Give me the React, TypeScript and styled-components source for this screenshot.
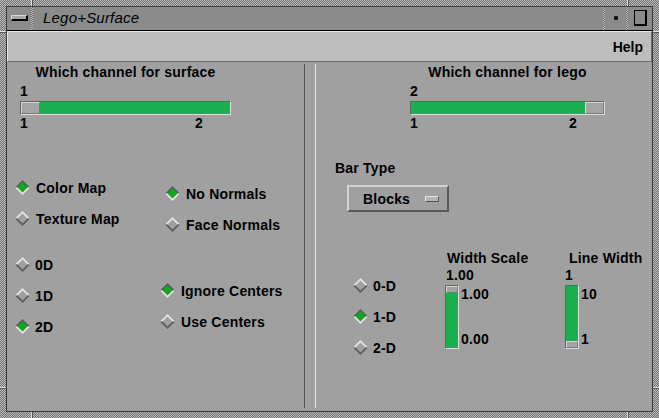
import styled, { createGlobalStyle } from 'styled-components'

const GlobalStyle = createGlobalStyle`
  html, body {
    margin: 0;
    padding: 0;
    background: #a0a0a0;
  }
  body {
    font-family: "Liberation Sans", Arial, Helvetica, sans-serif;
    color: #000;
  }
`

const stipple = `
  background-color: #969696;
  background-image: repeating-conic-gradient(#727272 0 25%, #bcbcbc 0 50%);
  background-size: 2px 2px;
`

const GREEN = '#1bb04f'
const LIGHT = '#dedede'
const DARK = '#646464'

const Window = styled.div`
  position: relative;
  width: 659px;
  height: 418px;
  box-sizing: border-box;
  padding: 6px;
  display: flex;
  ${stipple}
`

const Inner = styled.div`
  flex: 1;
  display: flex;
  flex-direction: column;
  border: 1px solid #3a3a3a;
  background: #a0a0a0;
`

const Mark = styled.div<{ $x?: number; $y?: number; $right?: boolean; $bottom?: boolean; $vertical?: boolean }>`
  position: absolute;
  background: #e2e2e2;
  border-${p => (p.$vertical ? 'right' : 'bottom')}: 1px solid #555;
  ${p => (p.$vertical ? 'width: 1px; height: 6px;' : 'width: 6px; height: 1px;')}
  ${p => (p.$vertical ? `left: ${p.$x}px;` : p.$right ? 'right: 0;' : 'left: 0;')}
  ${p => (p.$vertical ? (p.$bottom ? 'bottom: 0;' : 'top: 0;') : `top: ${p.$y}px;`)}
`

const TitleBar = styled.div`
  height: 24px;
  box-sizing: border-box;
  display: flex;
  background: #8b8b8b;
  border-bottom: 1px solid #000;
`

const TitleSep = styled.div`
  width: 2px;
  ${stipple}
`

const MenuButton = styled.div`
  width: 24px;
  display: flex;
  align-items: center;
  justify-content: center;
`

const MenuGlyph = styled.div`
  width: 17px;
  height: 6px;
  box-sizing: border-box;
  margin-top: -1px;
  background: #a8a8a8;
  border-top: 1px solid #d8d8d8;
  border-left: 1px solid #d8d8d8;
  border-bottom: 2px solid #000;
  border-right: 2px solid #000;
`

const TitleText = styled.div`
  flex: 1;
  padding-left: 10px;
  font-size: 15px;
  font-style: italic;
  line-height: 22px;
  letter-spacing: 0.2px;
`

const WinButton = styled.div<{ $w: number }>`
  width: ${p => p.$w}px;
  display: flex;
  align-items: center;
  justify-content: center;
`

const Dot = styled.div`
  width: 4px;
  height: 4px;
  box-sizing: border-box;
  background: #000;
  border: 1px solid #222;
  margin-top: -2px;
`

const MaxGlyph = styled.div`
  width: 13px;
  height: 16px;
  box-sizing: border-box;
  border: 1px solid #000;
  border-right-width: 2px;
  border-bottom-width: 2px;
  background: #8b8b8b;
  margin-top: -2px;
`

const MenuBar = styled.div`
  height: 31px;
  box-sizing: border-box;
  display: flex;
  align-items: center;
  justify-content: flex-end;
  padding-right: 8px;
  background: #bdbdbd;
  border-top: 1px solid #e8e8e8;
  border-left: 1px solid #e8e8e8;
  border-bottom: 1px solid #6c6c6c;
  border-right: 1px solid #6c6c6c;
`

const MenuItem = styled.span`
  font-size: 14px;
  font-weight: bold;
  line-height: 16px;
`

const Content = styled.div`
  flex: 1;
  display: grid;
  grid-template-columns: 297px 12px 1fr;
  font-size: 14px;
  font-weight: bold;
  letter-spacing: 0.2px;
`

const Panel = styled.div`
  padding-top: 2px;
  display: flex;
  flex-direction: column;
  align-items: flex-start;
`

const Separator = styled.div`
  margin: 2px 0 3px;
  border-left: 1px solid #555;
  border-right: 1px solid #e4e4e4;
`

const Line = styled.div<{ $top?: number; $left?: number }>`
  line-height: 16px;
  white-space: nowrap;
  margin-top: ${p => p.$top ?? 0}px;
  margin-left: ${p => p.$left ?? 0}px;
`

const SliderBlock = styled.div<{ $left: number; $width: number }>`
  margin-left: ${p => p.$left}px;
  width: ${p => p.$width}px;
`

const SliderTitle = styled.div`
  line-height: 16px;
  white-space: nowrap;
  display: flex;
  justify-content: center;
`

const Trough = styled.div<{ $vertical?: boolean }>`
  display: flex;
  flex-direction: ${p => (p.$vertical ? 'column' : 'row')};
  box-sizing: border-box;
  ${p => (p.$vertical ? 'width: 14px; height: 64px;' : 'height: 14px; margin-top: 2px;')}
  background: ${GREEN};
  border-top: 1px solid ${DARK};
  border-left: 1px solid ${DARK};
  border-bottom: 1px solid ${LIGHT};
  border-right: 1px solid ${LIGHT};
`

const Thumb = styled.div<{ $end?: boolean; $vertical?: boolean }>`
  box-sizing: border-box;
  ${p => (p.$vertical ? 'height: 7px;' : 'width: 19px;')}
  ${p => (p.$end ? (p.$vertical ? 'margin-top: auto;' : 'margin-left: auto;') : '')}
  background: #a4a4a4;
  border-top: 1px solid #d6d6d6;
  border-left: 1px solid #d6d6d6;
  border-bottom: 1px solid #7a7a7a;
  border-right: 1px solid #7a7a7a;
`

const ScaleLabels = styled.div<{ $pad: number }>`
  display: flex;
  justify-content: space-between;
  padding-right: ${p => p.$pad}px;
  line-height: 16px;
`

const RadioRow = styled.div<{ $top: number; $left: number }>`
  display: flex;
  align-items: flex-start;
  margin-top: ${p => p.$top}px;
  margin-left: ${p => p.$left}px;
`

const RadioGroup = styled.div<{ $width?: number; $top?: number; $left?: number }>`
  display: flex;
  flex-direction: column;
  ${p => (p.$width ? `width: ${p.$width}px;` : '')}
  margin-top: ${p => p.$top ?? 0}px;
  margin-left: ${p => p.$left ?? 0}px;
`

const RadioItem = styled.div<{ $gap?: number }>`
  display: flex;
  align-items: center;
  gap: ${p => p.$gap ?? 6}px;
  height: 31px;
  line-height: 16px;
  white-space: nowrap;
`

const OptionButton = styled.div`
  margin-top: 9px;
  margin-left: 31px;
  width: 102px;
  height: 27px;
  box-sizing: border-box;
  display: flex;
  align-items: center;
  padding-left: 14px;
  padding-right: 8px;
  border-top: 2px solid #d2d2d2;
  border-left: 2px solid #d2d2d2;
  border-bottom: 2px solid #5a5a5a;
  border-right: 2px solid #5a5a5a;
  line-height: 16px;
`

const Indicator = styled.div`
  margin-left: auto;
  width: 14px;
  height: 6px;
  box-sizing: border-box;
  background: #b4b4b4;
  border-top: 1px solid #e6e6e6;
  border-left: 1px solid #e6e6e6;
  border-bottom: 1px solid #555;
  border-right: 1px solid #555;
`

const BottomArea = styled.div`
  display: flex;
  align-items: flex-start;
  margin-top: 38px;
`

const VScale = styled.div<{ $width?: number }>`
  display: flex;
  flex-direction: column;
  ${p => (p.$width ? `width: ${p.$width}px;` : '')}
`

const VScaleRow = styled.div`
  display: flex;
  margin-top: 2px;
`

const VScaleLabels = styled.div`
  display: flex;
  flex-direction: column;
  justify-content: space-between;
  height: 64px;
  box-sizing: border-box;
  padding: 1px 0 2px;
  margin-left: 2px;
  line-height: 16px;
`

const Diamond = ({ on }: { on?: boolean }) => (
  <svg width="15" height="15" viewBox="0 0 15 15" style={{ flex: 'none' }}>
    <polygon points="0,7.5 7.5,0 15,7.5" fill={on ? '#5c5c5c' : '#e4e4e4'} />
    <polygon points="0,7.5 15,7.5 7.5,15" fill={on ? '#e4e4e4' : '#5c5c5c'} />
    <polygon points="7.5,2.5 12.5,7.5 7.5,12.5 2.5,7.5" fill={on ? '#12a81c' : '#a0a0a0'} />
  </svg>
)

const Radio = ({ label, on, gap }: { label: string; on?: boolean; gap?: number }) => (
  <RadioItem $gap={gap}>
    <Diamond on={on} />
    <span>{label}</span>
  </RadioItem>
)

const HSlider = ({ title, value, max, left, width, end }: { title: string; value: string; max: string; left: number; width: number; end?: boolean }) => (
  <SliderBlock $left={left} $width={width}>
    <SliderTitle>{title}</SliderTitle>
    <Line $top={3}>{value}</Line>
    <Trough>
      <Thumb $end={end} />
    </Trough>
    <ScaleLabels $pad={28}>
      <span>1</span>
      <span>{max}</span>
    </ScaleLabels>
  </SliderBlock>
)

const VSlider = ({ title, value, top, bottom, width, indent, end }: { title: string; value: string; top: string; bottom: string; width?: number; indent: number; end?: boolean }) => (
  <VScale $width={width}>
    <Line $left={indent}>{title}</Line>
    <Line $top={1} $left={end ? 0 : 1}>{value}</Line>
    <VScaleRow>
      <Trough $vertical>
        <Thumb $vertical $end={end} />
      </Trough>
      <VScaleLabels>
        <span>{top}</span>
        <span>{bottom}</span>
      </VScaleLabels>
    </VScaleRow>
  </VScale>
)

export default function App() {
  return (
    <>
      <GlobalStyle />
      <Window>
        <Mark $vertical $x={31} />
        <Mark $vertical $x={627} />
        <Mark $vertical $bottom $x={31} />
        <Mark $vertical $bottom $x={627} />
        <Mark $y={31} />
        <Mark $right $y={31} />
        <Mark $y={387} />
        <Mark $right $y={387} />
        <Inner>
          <TitleBar>
            <MenuButton>
              <MenuGlyph />
            </MenuButton>
            <TitleSep />
            <TitleText>Lego+Surface</TitleText>
            <TitleSep />
            <WinButton $w={21}>
              <Dot />
            </WinButton>
            <TitleSep />
            <WinButton $w={24}>
              <MaxGlyph />
            </WinButton>
          </TitleBar>
          <MenuBar>
            <MenuItem>Help</MenuItem>
          </MenuBar>
          <Content>
            <Panel>
              <HSlider title="Which channel for surface" value="1" max="2" left={13} width={211} />
              <RadioRow $top={41} $left={8}>
                <RadioGroup $width={150}>
                  <Radio label="Color Map" on />
                  <Radio label="Texture Map" />
                </RadioGroup>
                <RadioGroup $top={6}>
                  <Radio label="No Normals" on />
                  <Radio label="Face Normals" />
                </RadioGroup>
              </RadioRow>
              <RadioRow $top={9} $left={8}>
                <RadioGroup $width={145}>
                  <Radio label="0D" gap={5} />
                  <Radio label="1D" gap={5} />
                  <Radio label="2D" on gap={5} />
                </RadioGroup>
                <RadioGroup $top={26}>
                  <Radio label="Ignore Centers" on />
                  <Radio label="Use Centers" />
                </RadioGroup>
              </RadioRow>
            </Panel>
            <Separator />
            <Panel>
              <HSlider title="Which channel for lego" value="2" max="2" left={94} width={195} end />
              <Line $top={29} $left={19}>Bar Type</Line>
              <OptionButton>
                <span>Blocks</span>
                <Indicator />
              </OptionButton>
              <BottomArea>
                <RadioGroup $width={92} $left={37} $top={20}>
                  <Radio label="0-D" gap={5} />
                  <Radio label="1-D" on gap={5} />
                  <Radio label="2-D" gap={5} />
                </RadioGroup>
                <VSlider title="Width Scale" value="1.00" top="1.00" bottom="0.00" width={120} indent={2} />
                <VSlider title="Line Width" value="1" top="10" bottom="1" indent={4} end />
              </BottomArea>
            </Panel>
          </Content>
        </Inner>
      </Window>
    </>
  )
}
